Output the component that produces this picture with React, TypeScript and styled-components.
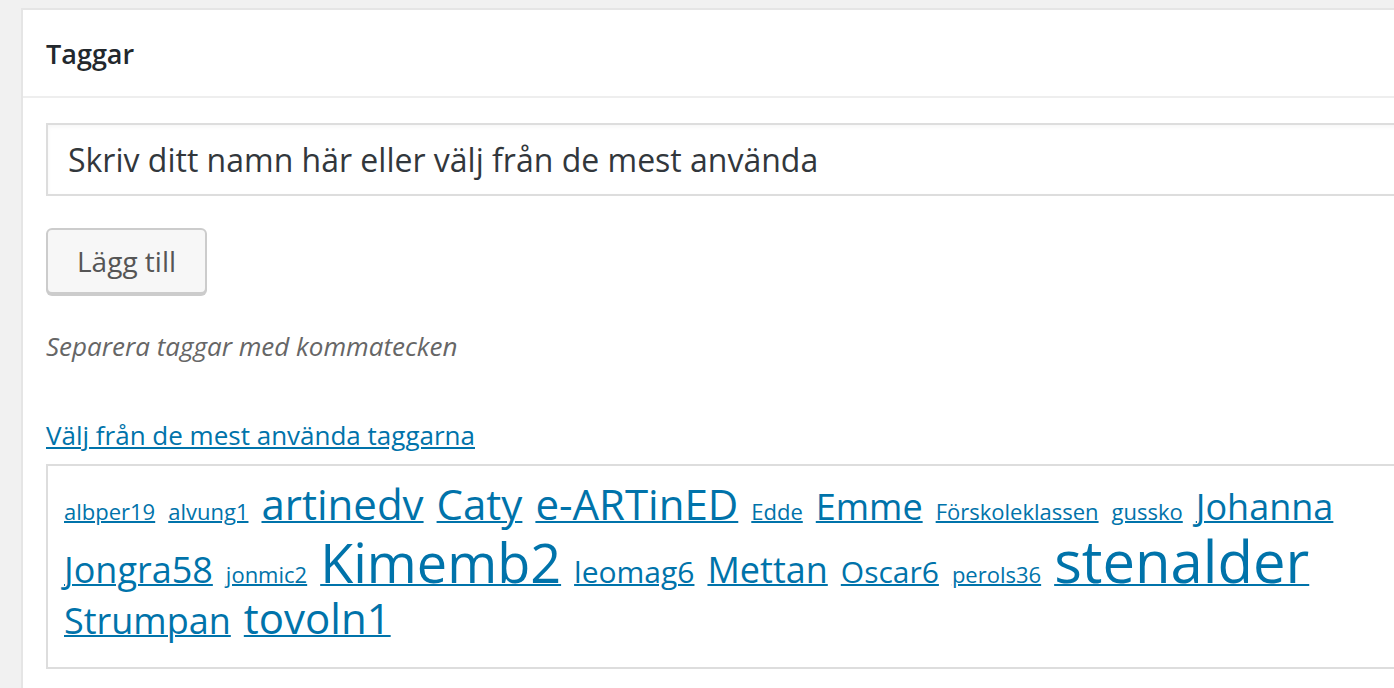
import React from 'react';
import styled, { createGlobalStyle } from 'styled-components';

const GlobalStyle = createGlobalStyle`
  html, body {
    margin: 0;
    padding: 0;
    background: #f1f1f1;
    overflow: hidden;
  }
  body {
    font-family: "Open Sans", "Noto Sans", sans-serif;
    color: #444;
  }
`;

const Page = styled.div`
  padding: 8px 0 0 21px;
  height: 688px;
  box-sizing: border-box;
  overflow: hidden;
`;

const Panel = styled.div`
  background: #fff;
  border: 2px solid #e5e5e5;
  border-right: none;
  margin-right: -80px;
  min-height: 700px;
`;

const Header = styled.div`
  height: 86px;
  display: flex;
  align-items: center;
  padding-left: 23px;
  border-bottom: 2px solid #eee;
`;

const Title = styled.h2`
  margin: 0;
  font-size: 27px;
  font-weight: 600;
  color: #23282d;
`;

const Body = styled.div`
  padding: 25px 20px 0 23px;
`;

const TagInput = styled.input`
  display: block;
  box-sizing: border-box;
  width: 100%;
  height: 73px;
  padding: 0 20px;
  border: 2px solid #ddd;
  box-shadow: inset 0 2px 4px rgba(0, 0, 0, 0.04);
  font-family: "Open Sans", sans-serif;
  font-size: 32px;
  color: #32373c;
  outline: none;

  &::placeholder {
    color: #32373c;
    opacity: 1;
  }
`;

const AddButton = styled.button`
  display: block;
  margin-top: 32px;
  box-sizing: border-box;
  height: 66px;
  padding: 0 29px;
  background: #f7f7f7;
  border: 2px solid #ccc;
  border-radius: 6px;
  box-shadow: 0 2px 0 #ccc;
  font-family: "Open Sans", sans-serif;
  font-size: 28px;
  color: #555;
`;

const Hint = styled.p`
  margin: 33px 0 0;
  font-size: 26px;
  font-style: italic;
  color: #666;
  line-height: 38px;
`;

const CloudLink = styled.a`
  display: inline-block;
  margin-top: 51px;
  font-size: 26px;
  line-height: 38px;
  color: #0073aa;
  text-decoration: underline;
`;

const Cloud = styled.div`
  margin-top: 10px;
  padding: 14px 10px 25px 16px;
  border: 2px solid #ddd;
  font-size: 0;
  line-height: 1.14;
`;

const TagLink = styled.a<{ $size: number }>`
  display: inline-block;
  white-space: nowrap;
  margin-right: 13px;
  font-size: ${(p) => p.$size}px;
  color: #0073aa;
  text-decoration: underline;
  text-decoration-thickness: ${(p) => (p.$size > 40 ? 2 : 1.5)}px;
`;

const tags: [string, number][] = [
  ['albper19', 22],
  ['alvung1', 22],
  ['artinedv', 42],
  ['Caty', 42],
  ['e-ARTinED', 42],
  ['Edde', 22],
  ['Emme', 36],
  ['Förskoleklassen', 22],
  ['gussko', 22],
  ['Johanna', 36],
  ['Jongra58', 36],
  ['jonmic2', 22],
  ['Kimemb2', 54],
  ['leomag6', 30],
  ['Mettan', 36],
  ['Oscar6', 30],
  ['perols36', 22],
  ['stenalder', 58],
  ['Strumpan', 36],
  ['tovoln1', 42],
];

export default function App() {
  return (
    <>
      <GlobalStyle />
      <Page>
        <Panel>
          <Header>
            <Title>Taggar</Title>
          </Header>
          <Body>
            <TagInput placeholder="Skriv ditt namn här eller välj från de mest använda" />
            <AddButton>Lägg till</AddButton>
            <Hint>Separera taggar med kommatecken</Hint>
            <CloudLink href="#">Välj från de mest använda taggarna</CloudLink>
            <Cloud>
              {tags.map(([name, size]) => (
                <TagLink key={name} href="#" $size={size}>
                  {name}
                </TagLink>
              ))}
            </Cloud>
          </Body>
        </Panel>
      </Page>
    </>
  );
}
